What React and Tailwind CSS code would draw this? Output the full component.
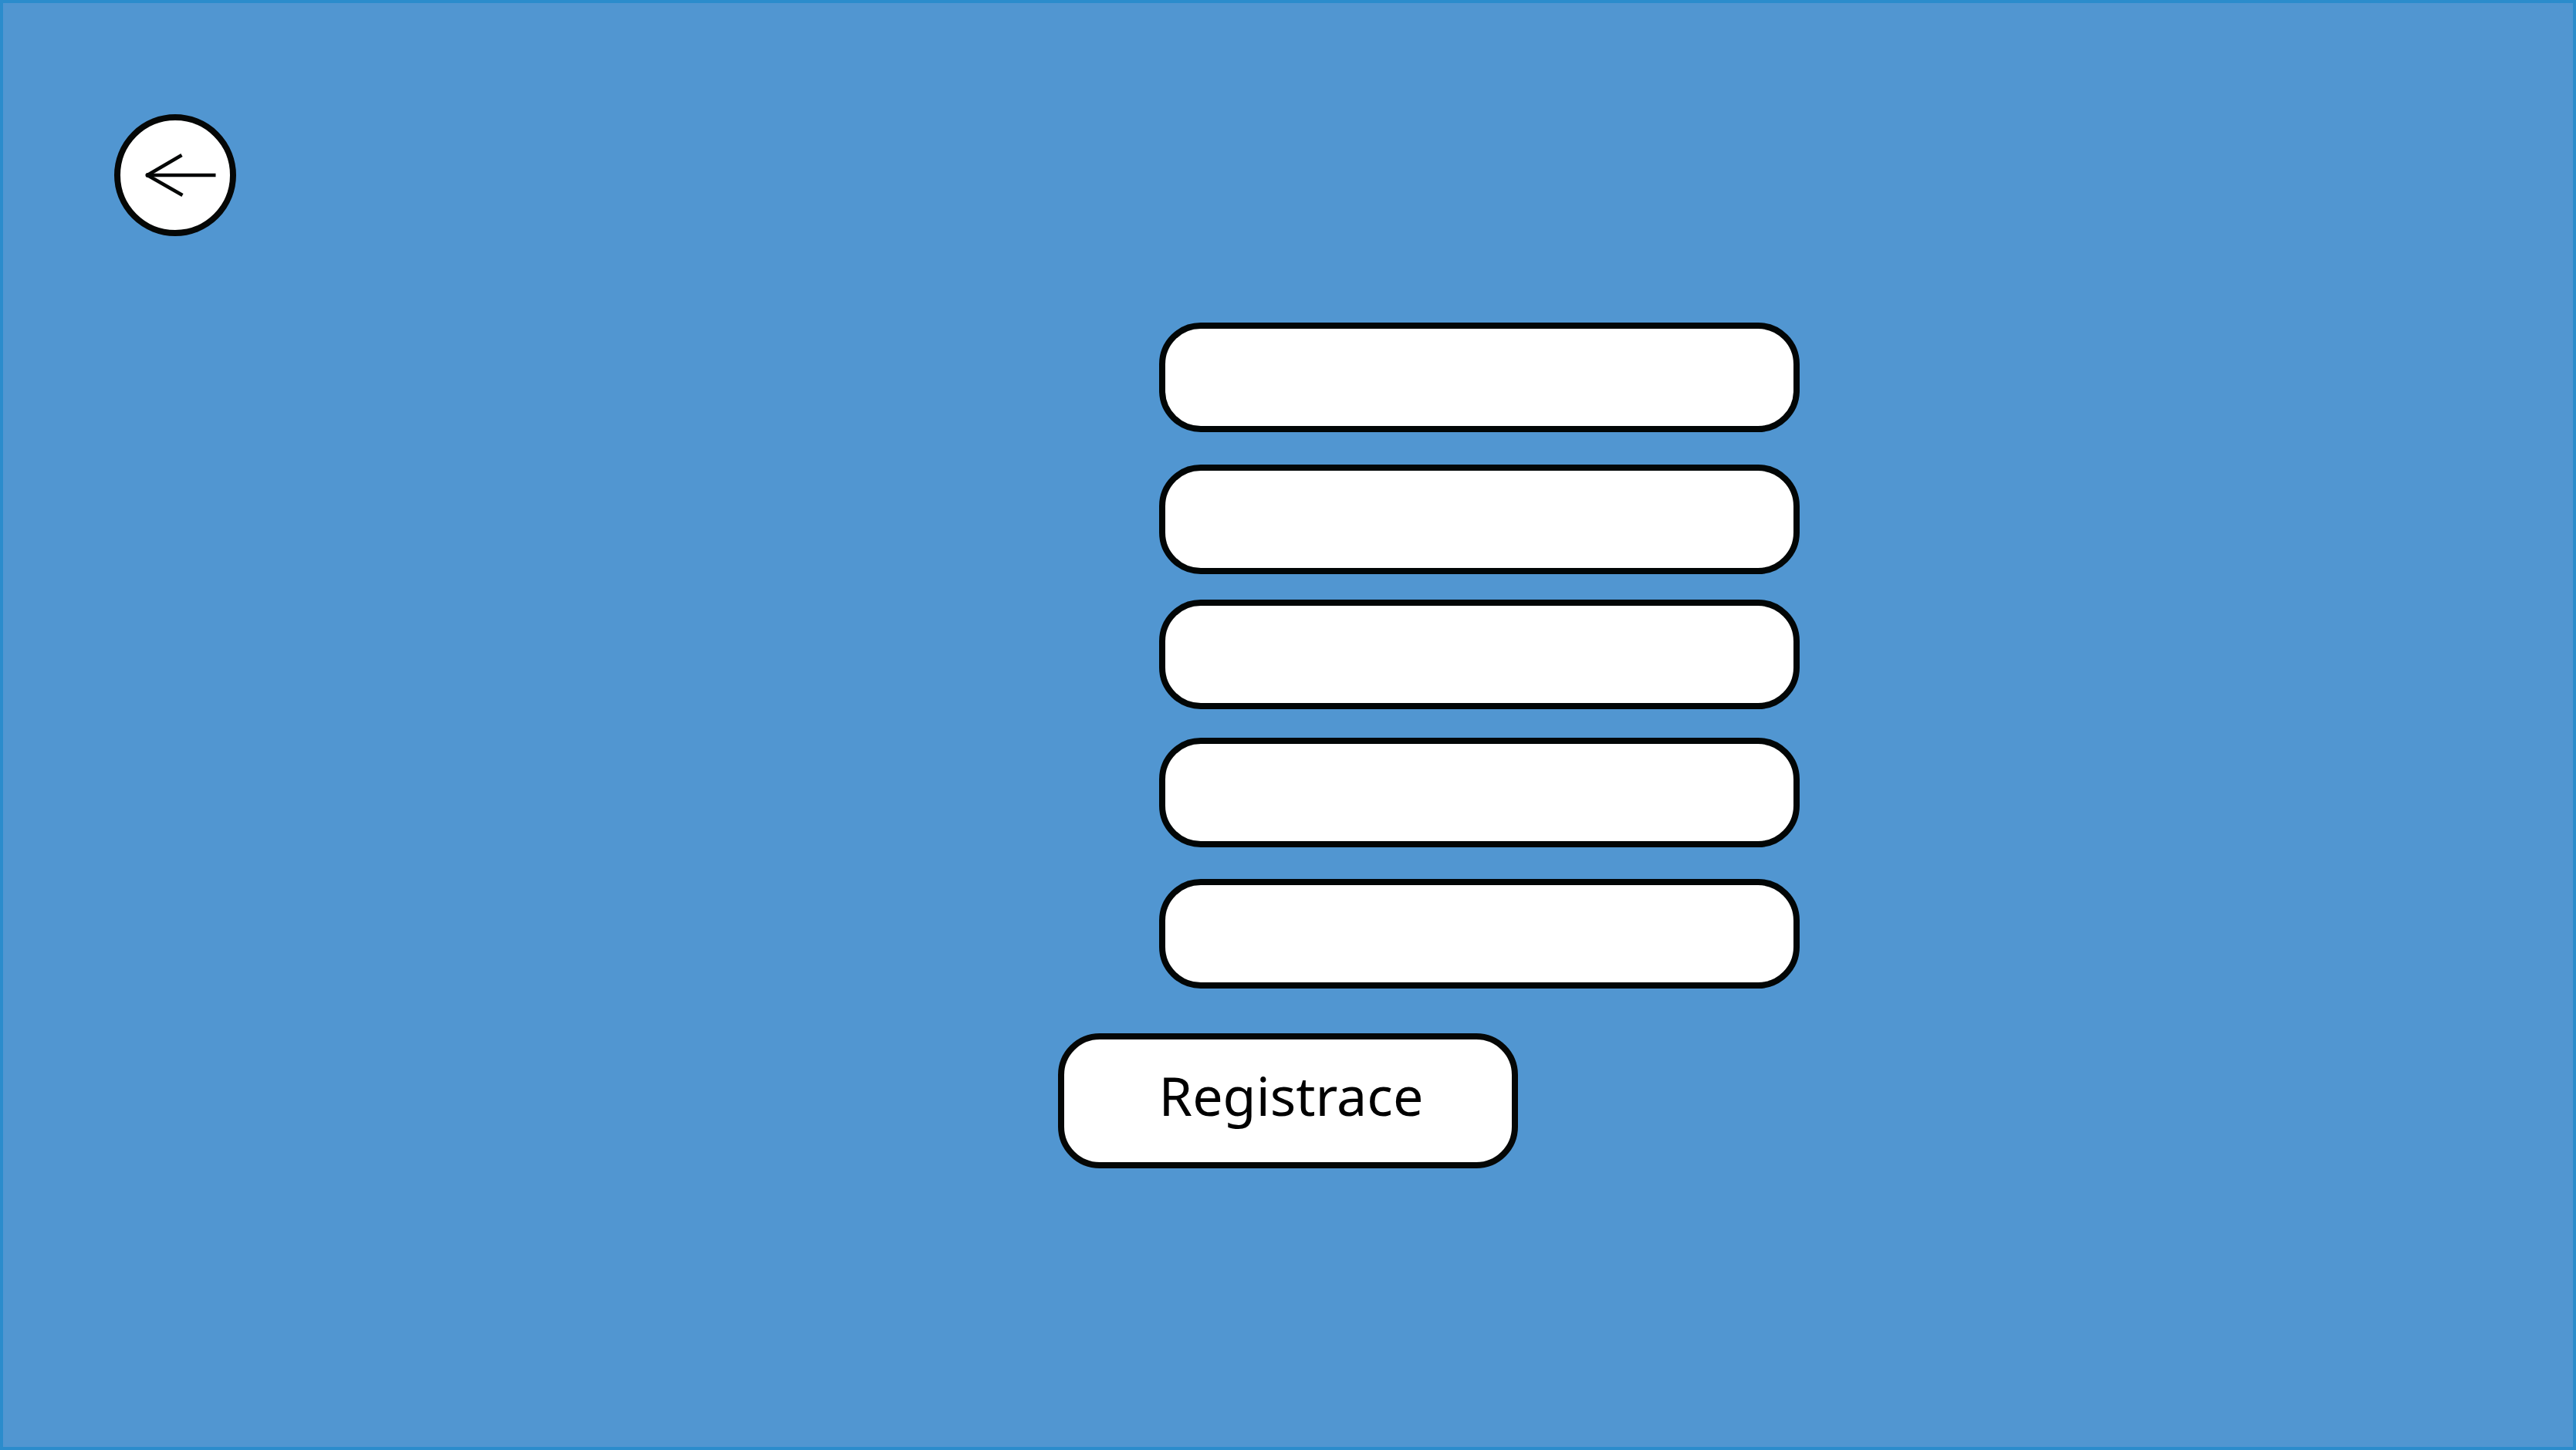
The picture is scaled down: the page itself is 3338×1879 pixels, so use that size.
const fields = [
  { id: "field-1", label: "Pole 1", gap: "mb-[42px]" },
  { id: "field-2", label: "Pole 2", gap: "mb-[33px]" },
  { id: "field-3", label: "Pole 3", gap: "mb-[37px]" },
  { id: "field-4", label: "Pole 4", gap: "mb-[41px]" },
  { id: "field-5", label: "Pole 5", gap: "mb-[58px]" },
];

function BackButton() {
  return (
    <button
      type="button"
      aria-label="Zpět"
      className="size-[158px] shrink-0 rounded-full border-8 border-[#050706] bg-white"
    >
      <svg viewBox="0 0 142 142" fill="none" stroke="#050706" strokeWidth="4.500" className="size-full">
        <path d="M36 71H123.500" />
        <path d="M79.500 45L35 71L80.500 97" strokeLinejoin="round" />
        <circle cx="35.500" cy="71" r="3" fill="#050706" stroke="none" />
      </svg>
    </button>
  );
}

export default function App() {
  return (
    <div className="min-h-screen border-4 border-[#2b8ccc] bg-[#5196d1] font-['Noto_Sans',sans-serif]">
      <header className="flex px-36 pt-36">
        <BackButton />
      </header>
      <main className="flex justify-center pt-28">
        <form className="flex w-full max-w-[1325px] flex-col items-end" onSubmit={(e) => e.preventDefault()}>
          {fields.map((field) => (
            <input
              key={field.id}
              id={field.id}
              type="text"
              aria-label={field.label}
              className={`h-[142px] w-full max-w-[830px] rounded-[54px] border-8 border-[#020606] bg-white px-12 text-[70px] ${field.gap}`}
            />
          ))}
          <button
            type="submit"
            className="h-[175px] w-full max-w-[596px] self-center rounded-[54px] border-8 border-[#050706] bg-white pb-4 pl-2 text-[70px] leading-[96px] text-black"
          >
            Registrace
          </button>
        </form>
      </main>
    </div>
  );
}
